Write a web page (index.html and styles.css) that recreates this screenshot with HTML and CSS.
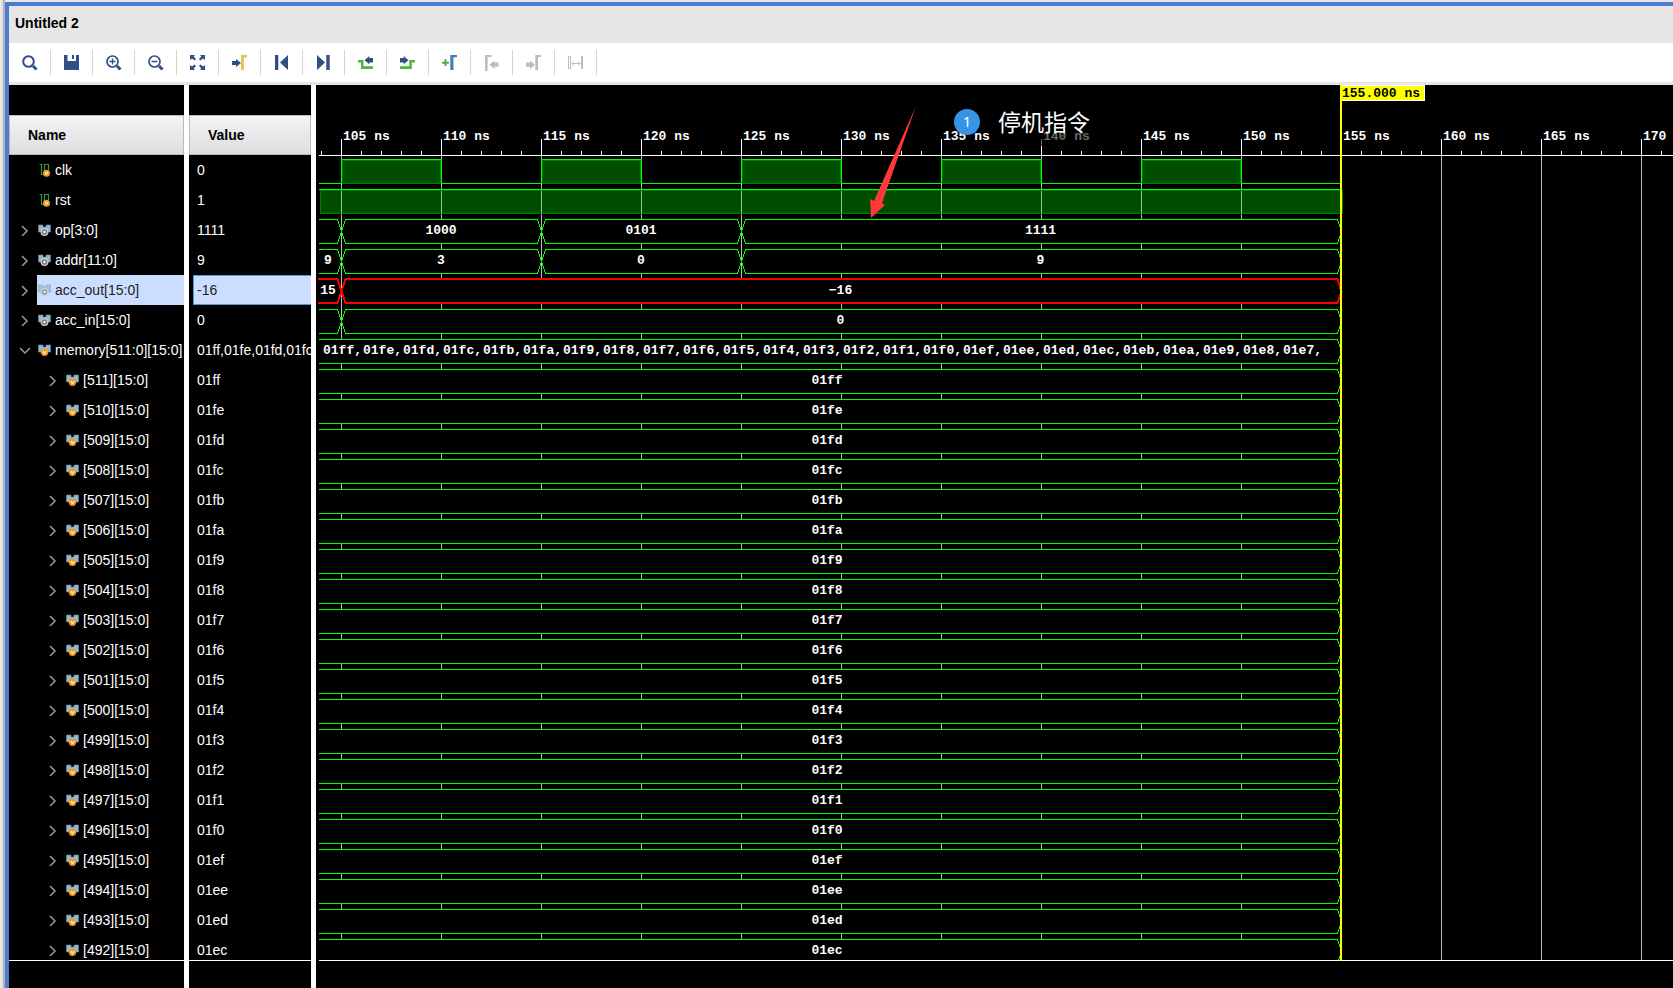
FILE: index.html
```html
<!DOCTYPE html>
<html lang="en">
<head>
<meta charset="utf-8">
<title>Untitled 2</title>
<link rel="stylesheet" href="styles.css">
</head>
<body>
<div class="edge"></div>
<main class="window">
  <h1 class="title">Untitled 2</h1>
  <div class="toolbar" role="toolbar" aria-label="Waveform tools">
    <button class="tool" aria-label="Find"><svg class="icon" viewBox="0 0 16 16"><g fill="none" stroke="#324f85"><circle cx="6.5" cy="6.5" r="5.3" stroke-width="2"/><path d="M11 11l3.5 3.5" stroke-width="3"/></g></svg></button>
    <button class="tool" aria-label="Save"><svg class="icon" viewBox="0 0 16 16"><path fill="#324f85" d="M0 0h3.500v6H12V0h3v15H0z"/><path fill="#324f85" d="M8 0h2v4H8z"/></svg></button>
    <button class="tool" aria-label="Zoom in"><svg class="icon" viewBox="0 0 16 16"><g fill="none" stroke="#324f85"><circle cx="6.5" cy="6.5" r="5.5" stroke-width="1.7"/><path d="M11 11l3.5 3.5" stroke-width="3"/><path d="M3.5 6.5h6M6.5 3.5v6" stroke-width="1.3"/></g></svg></button>
    <button class="tool" aria-label="Zoom out"><svg class="icon" viewBox="0 0 16 16"><g fill="none" stroke="#324f85"><circle cx="6.5" cy="6.5" r="5.5" stroke-width="1.7"/><path d="M11 11l3.5 3.5" stroke-width="3"/><path d="M3.5 6.5h6" stroke-width="1.5"/></g></svg></button>
    <button class="tool" aria-label="Zoom fit"><svg class="icon" viewBox="0 0 16 16"><path fill="#324f85" d="M0 0h5L3.700 1.500 6 4 4.500 5.500 2 3.500 0 5zM15 0v5l-2-1.500-2.500 2L9 4l2.300-2.500L10 0zM0 15v-5l2 1.500 2.500-2L6 11l-2.300 2.500L5 15zM15 15h-5l1.300-1.500L9 11l1.500-1.500 2.500 2 2-1.500z"/></svg></button>
    <button class="tool" aria-label="Go to cursor"><svg class="icon" viewBox="0 0 16 16"><path fill="#324f85" d="M0 6h4V4l5 4-5 4v-2H0z"/><path fill="#e2c65c" d="M9 0h6v2.500h-3V15H9z"/></svg></button>
    <button class="tool" aria-label="Go to time 0"><svg class="icon" viewBox="0 0 16 16"><path fill="#324f85" d="M1 0h3.300v15H1zM14 0v15L6 7.500z"/></svg></button>
    <button class="tool" aria-label="Go to last time"><svg class="icon" viewBox="0 0 16 16"><path fill="#324f85" d="M1 0l8 7.500L1 15zM10.300 0h3.400v15h-3.400z"/></svg></button>
    <button class="tool" aria-label="Previous transition"><svg class="icon" viewBox="0 0 16 16"><path fill="#4db53e" d="M0 5h5.500v6.200H15V14H3V7.500H0z"/><path fill="#324f85" d="M15 3h-3.700V1L6.500 5.200l4.800 4V7.500H15z"/></svg></button>
    <button class="tool" aria-label="Next transition"><svg class="icon" viewBox="0 0 16 16"><path fill="#4db53e" d="M0 11.200h9.300V5H15v2.500h-3.200V14H0z"/><path fill="#324f85" d="M0 3h3.700V1l4.800 4.200-4.800 4V7.500H0z"/></svg></button>
    <button class="tool" aria-label="Add marker"><svg class="icon" viewBox="0 0 16 16"><path fill="#45b04a" d="M2.500 4.300h2v2.400h2.400v2H4.500V11h-2V8.700H0v-2h2.500z"/><path fill="#3d82b5" d="M8.300 0H15v2.300h-3.500V15H8.300z"/></svg></button>
    <button class="tool" aria-label="Previous marker" disabled><svg class="icon" viewBox="0 0 16 16"><path fill="#bdbdbd" d="M1 0h6.500v2H3.600v14.500H1zM14.500 7.500h-4V5.500L5.300 9.700l5.200 4.300v-2.200h4z"/></svg></button>
    <button class="tool" aria-label="Next marker" disabled><svg class="icon" viewBox="0 0 16 16"><path fill="#bdbdbd" d="M9.300 0H15v2h-3v13H9.300zM0 7.500h4V5.500l5 4.200L4 14v-2.200H0z"/></svg></button>
    <button class="tool" aria-label="Swap cursors" disabled><svg class="icon" viewBox="0 0 16 16"><path fill="none" stroke="#bdbdbd" d="M.5 1.500h2v12h-2zM4 8.500h8M6 6.500l-2 2 2 2M10 6.500l2 2-2 2"/><path fill="#bdbdbd" d="M13 1h2v13h-2z"/></svg></button>
  </div>
  <div class="panes">
    <section class="pane names">
      <h2 class="head">Name</h2>
      <ul class="list" id="names"></ul>
    </section>
    <section class="pane values">
      <h2 class="head">Value</h2>
      <ul class="list" id="values"></ul>
    </section>
    <section class="wave">
      <svg class="ruler" id="ruler"></svg>
      <div class="tracks" id="tracks"></div>
      <div class="wavefoot"></div>
      <div class="cursor"><span class="flag">155.000 ns</span></div>
      <svg class="arrow" viewBox="0 0 48 112"><path fill="#ff3838" d="M47 0L13 97l3 2L2 112 1 93l4 2z"/></svg>
      <div class="note"><span class="badge">1</span><span class="caption" lang="zh">停机指令</span></div>
    </section>
  </div>
</main>
<script src="wave.js"></script>
</body>
</html>
```
FILE: styles.css
```css
* { box-sizing: border-box; }
body {
  margin: 0;
  height: 100vh;
  display: flex;
  overflow: hidden;
  font: 14px "Liberation Sans", Arial, sans-serif;
  background: #e6e6e6;
}
.edge { width: 5px; background: linear-gradient(90deg, #f0f0f0, #d8d8d8 3px, #b2b2b2 3px); }
.window {
  flex: 1;
  min-width: 0;
  display: flex;
  flex-direction: column;
  margin-top: 2px;
  border: solid #4a7dd1;
  border-width: 4px 0 0 4px;
}
.title {
  margin: 0;
  padding: 8px 6px 0;
  height: 37px;
  font-size: 14px;
  line-height: 18px;
}
.toolbar {
  display: flex;
  height: 42px;
  padding-top: 7px;
  background: #fff;
  border-bottom: 3px solid #e6e6e6;
}
.tool {
  width: 42px;
  height: 25px;
  padding: 0 0 0 13px;
  border: 0;
  border-right: 1px solid #d4d4d4;
  background: none;
}
.icon { display: block; width: 16px; height: 16px; }
.panes { flex: 1; min-height: 0; display: flex; background: #fff; gap: 5px; }
.pane {
  display: flex;
  flex-direction: column;
  padding-top: 30px;
  background: #000;
  color: #fff;
}
.names { width: 175px; }
.values { width: 122px; }
.head {
  margin: 0;
  height: 40px;
  padding-left: 18px;
  border: 1px solid #bbb;
  background: linear-gradient(#f3f3f3, #dedee2);
  color: #000;
  font-size: 14px;
  line-height: 38px;
}
.list {
  flex: 1;
  min-height: 0;
  margin: 0 0 27px;
  padding: 0;
  list-style: none;
  overflow: hidden;
  border-bottom: 1px solid #fff;
}
.row { display: flex; height: 30px; line-height: 30px; white-space: nowrap; }
.names .row { padding-left: 10px; }
.names .child { padding-left: 38px; }
.expander { width: 18px; padding: 0; border: 0; background: none; }
.glyph { display: block; width: 12px; height: 12px; }
.entry { flex: 1; min-width: 0; display: flex; align-items: center; gap: 3px; padding-left: 1px; overflow: hidden; }
.kind { flex: none; width: 14px; height: 14px; }
.values .row { margin-left: 4px; padding-left: 4px; overflow: hidden; }
.names .selected .entry { background: #ccdeff; color: #222; }
.names .selected .kind { opacity: .7; }
.values .selected { background: #ccdeff; color: #222; border: solid #4a9bd6; border-width: 1px 0 1px 1px; padding-left: 3px; line-height: 28px; }
.wave {
  position: relative;
  flex: 1;
  min-width: 0;
  display: flex;
  flex-direction: column;
  overflow: hidden;
  background: #000;
}
.ruler { display: block; flex: none; width: 100%; height: 71px; }
.tracks {
  flex: 1;
  min-height: 0;
  overflow: hidden;
  background: linear-gradient(90deg, #bbb 1px, transparent 1px) 25px 0 / 100px 100%;
}
.wavefoot { height: 28px; margin-left: 3px; border-top: 1px solid #fff; }
.track { display: block; width: 100%; height: 30px; }
.ruler text, .track text, .flag { font: bold 13px "Liberation Mono", monospace; fill: #fff; }
.ruler, .track { shape-rendering: crispEdges; }
.tick { stroke: #fff; }
.bus { fill: #000; stroke: #0f0; }
.bus.red { stroke: #f00; stroke-width: 2; }
.line { fill: none; stroke: #0f0; }
.high { fill: #00ff004d; stroke: #008000; }
.mid { text-anchor: middle; }
.cursor {
  position: absolute;
  left: 1024px;
  top: 0;
  bottom: 27px;
  border-left: 2px solid #ff0;
}
.ruler .tick { shape-rendering: crispEdges; }
.cursor .flag {
  display: block;
  width: 83px;
  height: 16px;
  border: solid #fff;
  border-width: 1px 1px 1px 0;
  background: #ff0;
  line-height: 16px;
  color: #000;
  white-space: nowrap;
}
.arrow { position: absolute; left: 553px; top: 21px; width: 48px; height: 112px; }
.note { position: absolute; left: 638px; top: 19px; display: flex; gap: 12px; color: #fff; }
.badge {
  width: 26px;
  height: 26px;
  margin-top: 5px;
  border-radius: 50%;
  background: #3794e5;
  text-align: center;
  font: 15px/24px "Noto Sans", sans-serif;
}
.caption {
  height: 42px;
  padding: 0 6px;
  background: rgba(0, 0, 0, .6);
  font: 23px/35px "Noto Sans CJK SC", sans-serif;
}
```
FILE: wave.js
```js
const hex = n => n.toString(16).padStart(4, '0');
const words = (from, count) => Array.from({ length: count }, (_, i) => hex(from - i));

const scalarIcon = '<svg class="kind" viewBox="0 0 14 14"><path d="M1.500 1.500h2v10h3v-10h4V7" fill="none" stroke="#2f9e4a" stroke-width="1.200"/><circle cx="8.500" cy="10.200" r="3.500" fill="#f59a23"/><path d="M7 8.700l1.500 3L10 8.700" fill="none" stroke="#fff"/></svg>';
const busShape = '<path fill="#8fb9d0" stroke="#71889a" stroke-width=".6" d="M.5 2H5v2h3V2h4.500v7h-12z"/>';
const busIcon = `<svg class="kind" viewBox="0 0 14 14">${busShape}<circle cx="6.500" cy="9" r="3.300" fill="#777" stroke="#ccc" stroke-width="1.300"/><circle cx="6.500" cy="9" r="1.200" fill="#fff"/></svg>`;
const memIcon = `<svg class="kind" viewBox="0 0 14 14">${busShape}<circle cx="6.500" cy="9.300" r="3.700" fill="#f59a23"/><path d="M5 8l1.500 3L8 8" fill="none" stroke="#fff"/></svg>`;
const chevron = d => `<svg class="glyph" viewBox="0 0 12 12"><path d="${d}" fill="none" stroke="#999" stroke-width="1.500"/></svg>`;
const closed = chevron('M3 2l5 5-5 5');
const open = chevron('M1 4l5 5 5-5');

const START = 3;
const END = 1025.5;

const signals = [
  { name: 'clk', value: '0', kind: 'clock' },
  { name: 'rst', value: '1', kind: 'level' },
  { name: 'op[3:0]', value: '1111', kind: 'bus', spans: [[25, ''], [225, '1000'], [425, '0101'], [END, '1111']] },
  { name: 'addr[11:0]', value: '9', kind: 'bus', spans: [[25, '9'], [225, '3'], [425, '0'], [END, '9']] },
  { name: 'acc_out[15:0]', value: '-16', kind: 'bus', selected: true, spans: [[25, '15'], [END, '−16']] },
  { name: 'acc_in[15:0]', value: '0', kind: 'bus', spans: [[25, ''], [END, '0']] },
  { name: 'memory[511:0][15:0]', value: words(511, 4).join(','), kind: 'memory' },
  ...words(511, 20).map((value, i) => ({ name: `[${511 - i}][15:0]`, value, kind: 'word', child: true }))
];

function busSpan(a, b, label, red, center) {
  const edge = red ? 2 : a;
  const y = red ? 3 : 3.5;
  const left = a === START ? `M${edge} ${y}` : `M${a + .5} 15.5L${a + 4.5} ${y}`;
  const back = a === START ? `H${edge}` : `H${a + 4.5}L${a + .5} 15.5`;
  const end = b === END ? b : b + .5;
  const x = center || (a === START ? 12 : (Math.min(b, 1024) + a) / 2);
  return `<path class="bus${red ? ' red' : ''}" d="${left}H${end - 4}L${end} 15.5L${end - 4} ${y + 24}${back}"/>` +
    (label ? `<text class="mid" x="${x}" y="18">${label}</text>` : '');
}

function drawTrack(s) {
  if (s.kind === 'clock') {
    let lows = '';
    let highs = '';
    let from = START;
    for (let x = 25; x < 1000; x += 200) {
      lows += `M${from} 27.5H${x}.5V3.5H${x + 100}.5V27.5`;
      highs += `<path class="high" d="M${x + 1}.5 4.5h98v23h-98z"/>`;
      from = x + 100.5;
    }
    return `${highs}<path class="line" d="${lows}M${from} 27.5H1024"/>`;
  }
  if (s.kind === 'level') {
    return '<path class="high" d="M4.5 4.5H1026v23H4.5z"/><path class="line" d="M3 3.5H1024"/>';
  }
  if (s.kind === 'memory') {
    return busSpan(START, END, '') + words(511, 25).map((w, i) => `<text x="${7 + i * 40}" y="18">${w},</text>`).join('');
  }
  if (s.kind === 'word') return busSpan(START, END, s.value, false, 511);
  let from = START;
  return s.spans.map(([to, label]) => {
    const part = busSpan(from, to, label, s.selected);
    from = to;
    return part;
  }).join('');
}

document.getElementById('names').innerHTML = signals.map(s => {
  const scalar = s.kind === 'clock' || s.kind === 'level';
  const memory = s.kind === 'memory';
  const icon = scalar ? scalarIcon : memory || s.child ? memIcon : busIcon;
  const toggle = scalar ? '<span class="expander"></span>'
    : `<button class="expander" aria-label="Expand ${s.name}">${memory ? open : closed}</button>`;
  return `<li class="row${s.child ? ' child' : ''}${s.selected ? ' selected' : ''}">${toggle}<span class="entry">${icon}<span>${s.name}</span></span></li>`;
}).join('');

document.getElementById('values').innerHTML = signals.map(s =>
  `<li class="row${s.selected ? ' selected' : ''}">${s.value}</li>`).join('');

document.getElementById('tracks').innerHTML = signals.map(s =>
  `<svg class="track">${drawTrack(s)}</svg>`).join('');

const ruler = document.getElementById('ruler');

function drawRuler() {
  const width = ruler.getBoundingClientRect().width;
  let marks = `<path class="tick" d="M3 70.5H${width}"/>`;
  for (let x = 5; x < width; x += 20) {
    const major = x % 100 === 25;
    marks += `<path class="tick" d="M${x}.5 ${major ? 54 : 66}V71"/>`;
    if (major) {
      const unit = x + 50 < width ? ' ns' : '';
      marks += `<text x="${x + 2}" y="55">${105 + (x - 25) / 20}${unit}</text>`;
    }
  }
  ruler.innerHTML = marks;
}

drawRuler();
addEventListener('resize', drawRuler);
```
